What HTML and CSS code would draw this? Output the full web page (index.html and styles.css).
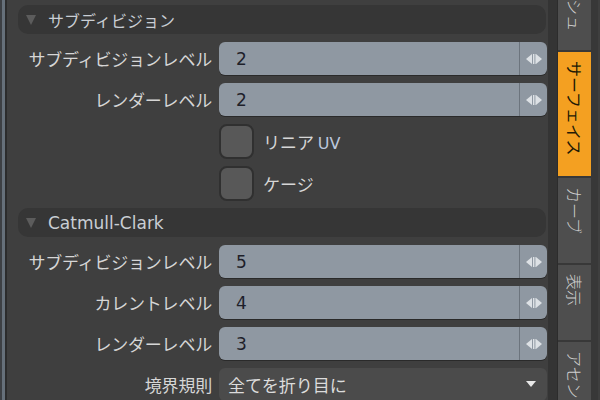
FILE: index.html
```html
<!DOCTYPE html>
<html lang="ja">
<head>
    <meta charset="UTF-8">
    <title>サブディビジョン</title>
    <link rel="stylesheet" href="styles.css">
</head>
<body>
    <div class="app">
        <div class="edge"></div>

        <div class="panel">
            <div class="group-head"><span class="caret"></span>サブディビジョン</div>

            <div class="row">
                <span class="label">サブディビジョンレベル</span>
                <div class="field">
                    <span class="value">2</span>
                    <span class="spin"><svg width="16" height="12" viewBox="0 0 16 12"><polygon points="0,6 6,1 6,11"/><rect x="7" y="1" width="1" height="10"/><rect x="8.6" y="1" width="1" height="10"/><polygon points="16,6 10,1 10,11"/></svg></span>
                </div>
            </div>
            <div class="row">
                <span class="label">レンダーレベル</span>
                <div class="field">
                    <span class="value">2</span>
                    <span class="spin"><svg width="16" height="12" viewBox="0 0 16 12"><polygon points="0,6 6,1 6,11"/><rect x="7" y="1" width="1" height="10"/><rect x="8.6" y="1" width="1" height="10"/><polygon points="16,6 10,1 10,11"/></svg></span>
                </div>
            </div>
            <div class="row check-row">
                <span class="label"></span>
                <div class="check-line"><span class="check"></span><span>リニア <span class="latin">UV</span></span></div>
            </div>
            <div class="row check-row">
                <span class="label"></span>
                <div class="check-line"><span class="check"></span><span>ケージ</span></div>
            </div>

            <div class="group-head"><span class="caret"></span><span class="latin">Catmull-Clark</span></div>

            <div class="row">
                <span class="label">サブディビジョンレベル</span>
                <div class="field">
                    <span class="value">5</span>
                    <span class="spin"><svg width="16" height="12" viewBox="0 0 16 12"><polygon points="0,6 6,1 6,11"/><rect x="7" y="1" width="1" height="10"/><rect x="8.6" y="1" width="1" height="10"/><polygon points="16,6 10,1 10,11"/></svg></span>
                </div>
            </div>
            <div class="row">
                <span class="label">カレントレベル</span>
                <div class="field">
                    <span class="value">4</span>
                    <span class="spin"><svg width="16" height="12" viewBox="0 0 16 12"><polygon points="0,6 6,1 6,11"/><rect x="7" y="1" width="1" height="10"/><rect x="8.6" y="1" width="1" height="10"/><polygon points="16,6 10,1 10,11"/></svg></span>
                </div>
            </div>
            <div class="row">
                <span class="label">レンダーレベル</span>
                <div class="field">
                    <span class="value">3</span>
                    <span class="spin"><svg width="16" height="12" viewBox="0 0 16 12"><polygon points="0,6 6,1 6,11"/><rect x="7" y="1" width="1" height="10"/><rect x="8.6" y="1" width="1" height="10"/><polygon points="16,6 10,1 10,11"/></svg></span>
                </div>
            </div>
            <div class="row">
                <span class="label">境界規則</span>
                <div class="dropdown">
                    <span>全てを折り目に</span>
                    <svg width="10" height="7" viewBox="0 0 10 7"><polygon points="0,0 10,0 5,6"/></svg>
                </div>
            </div>
        </div>

        <div class="gutter"></div>

        <div class="tabs">
            <div class="tab tab-mesh">メッシュ</div>
            <div class="tab active tab-surface">サーフェイス</div>
            <div class="tab tab-curve">カーブ</div>
            <div class="tab tab-view">表示</div>
            <div class="tab tab-asm">アセンブリ</div>
        </div>

        <div class="rim"></div>
    </div>
</body>
</html>
```

FILE: styles.css
```css
html, body {
    margin: 0;
    height: 100%;
    overflow: hidden;
}
body {
    background-color: #3f3f3f;
    font-family: "Noto Sans CJK JP", "Noto Sans", sans-serif;
    color: #d6d6d6;
}
.app {
    display: flex;
    width: 600px;
    height: 400px;
}
.edge {
    width: 3px;
    background-color: #66707a;
    border-left: 2px solid #3d4044;
    border-right: 2px solid #2c2c2c;
    flex-shrink: 0;
}
.latin {
    font-family: "DejaVu Sans", "Noto Sans", sans-serif;
}
.panel {
    width: 529px;
    flex-shrink: 0;
    padding: 5px 1px 0 11px;
    display: flex;
    flex-direction: column;
    gap: 8px;
}
.group-head {
    height: 29px;
    flex-shrink: 0;
    margin-right: 1px;
    display: flex;
    align-items: center;
    background-color: #363636;
    border-radius: 10px;
    font-size: 16px;
    color: #c9ced4;
    padding-left: 8px;
}
.group-head .latin {
    font-size: 17px;
}
.caret {
    width: 0;
    height: 0;
    border-left: 5px solid transparent;
    border-right: 5px solid transparent;
    border-top: 10px solid #5c5c5c;
    margin-right: 12px;
}
.row {
    display: grid;
    grid-template-columns: 194px 1fr;
    column-gap: 7px;
    height: 33px;
    flex-shrink: 0;
    align-items: center;
}
.check-row {
    height: 34px;
}
.label {
    text-align: right;
    font-size: 17px;
    white-space: nowrap;
    letter-spacing: -0.2px;
}
.field {
    height: 33px;
    display: flex;
    align-items: center;
    background-color: #8f98a2;
    border-radius: 6px;
    box-shadow: 0 1px 0 #2a2a2a;
}
.value {
    flex: 1;
    padding-left: 17px;
    font-family: "DejaVu Sans", "Noto Sans", sans-serif;
    font-size: 17px;
    color: #1e1f2a;
}
.spin {
    width: 27px;
    height: 100%;
    display: flex;
    align-items: center;
    justify-content: center;
    border-left: 1px solid #6c747d;
}
.spin svg {
    fill: #dde1e5;
}
.check-line {
    display: flex;
    align-items: center;
    gap: 9px;
    font-size: 17px;
}
.check-line .latin {
    color: #bcc7dc;
    font-size: 16px;
}
.check {
    width: 31px;
    height: 31px;
    background-color: #585858;
    border: 2px solid #303030;
    border-radius: 8px;
}
.dropdown {
    height: 33px;
    display: flex;
    align-items: center;
    justify-content: space-between;
    background-color: #4b4b4b;
    border-radius: 6px;
    padding: 0 11px 0 9px;
    font-size: 17px;
    color: #dcdcdc;
}
.dropdown svg {
    fill: #e8e8e8;
}
.gutter {
    width: 9px;
    flex-shrink: 0;
    background-color: #343434;
    border-right: 1px solid #2c2c2c;
}
.tabs {
    width: 33px;
    flex-shrink: 0;
    margin-top: -42px;
    display: flex;
    flex-direction: column;
    background-color: #4e4e4e;
}
.tab {
    writing-mode: vertical-rl;
    text-orientation: sideways;
    font-size: 16px;
    font-weight: 300;
    line-height: 33px;
    padding-top: 9px;
    box-sizing: border-box;
    color: #cfcfcf;
    border-bottom: 2px solid #383838;
    overflow: hidden;
    flex-shrink: 0;
}
.tab.active {
    background-color: #f4a021;
    color: #231a05;
    font-weight: 400;
}
.tab-mesh {
    height: 94px;
}
.tab-surface {
    height: 126px;
}
.tab-curve {
    height: 87px;
}
.tab-view {
    height: 77px;
}
.tab-asm {
    flex: 1;
    border-bottom: none;
}
.rim {
    width: 7px;
    flex-shrink: 0;
    background-color: #383838;
}
```
